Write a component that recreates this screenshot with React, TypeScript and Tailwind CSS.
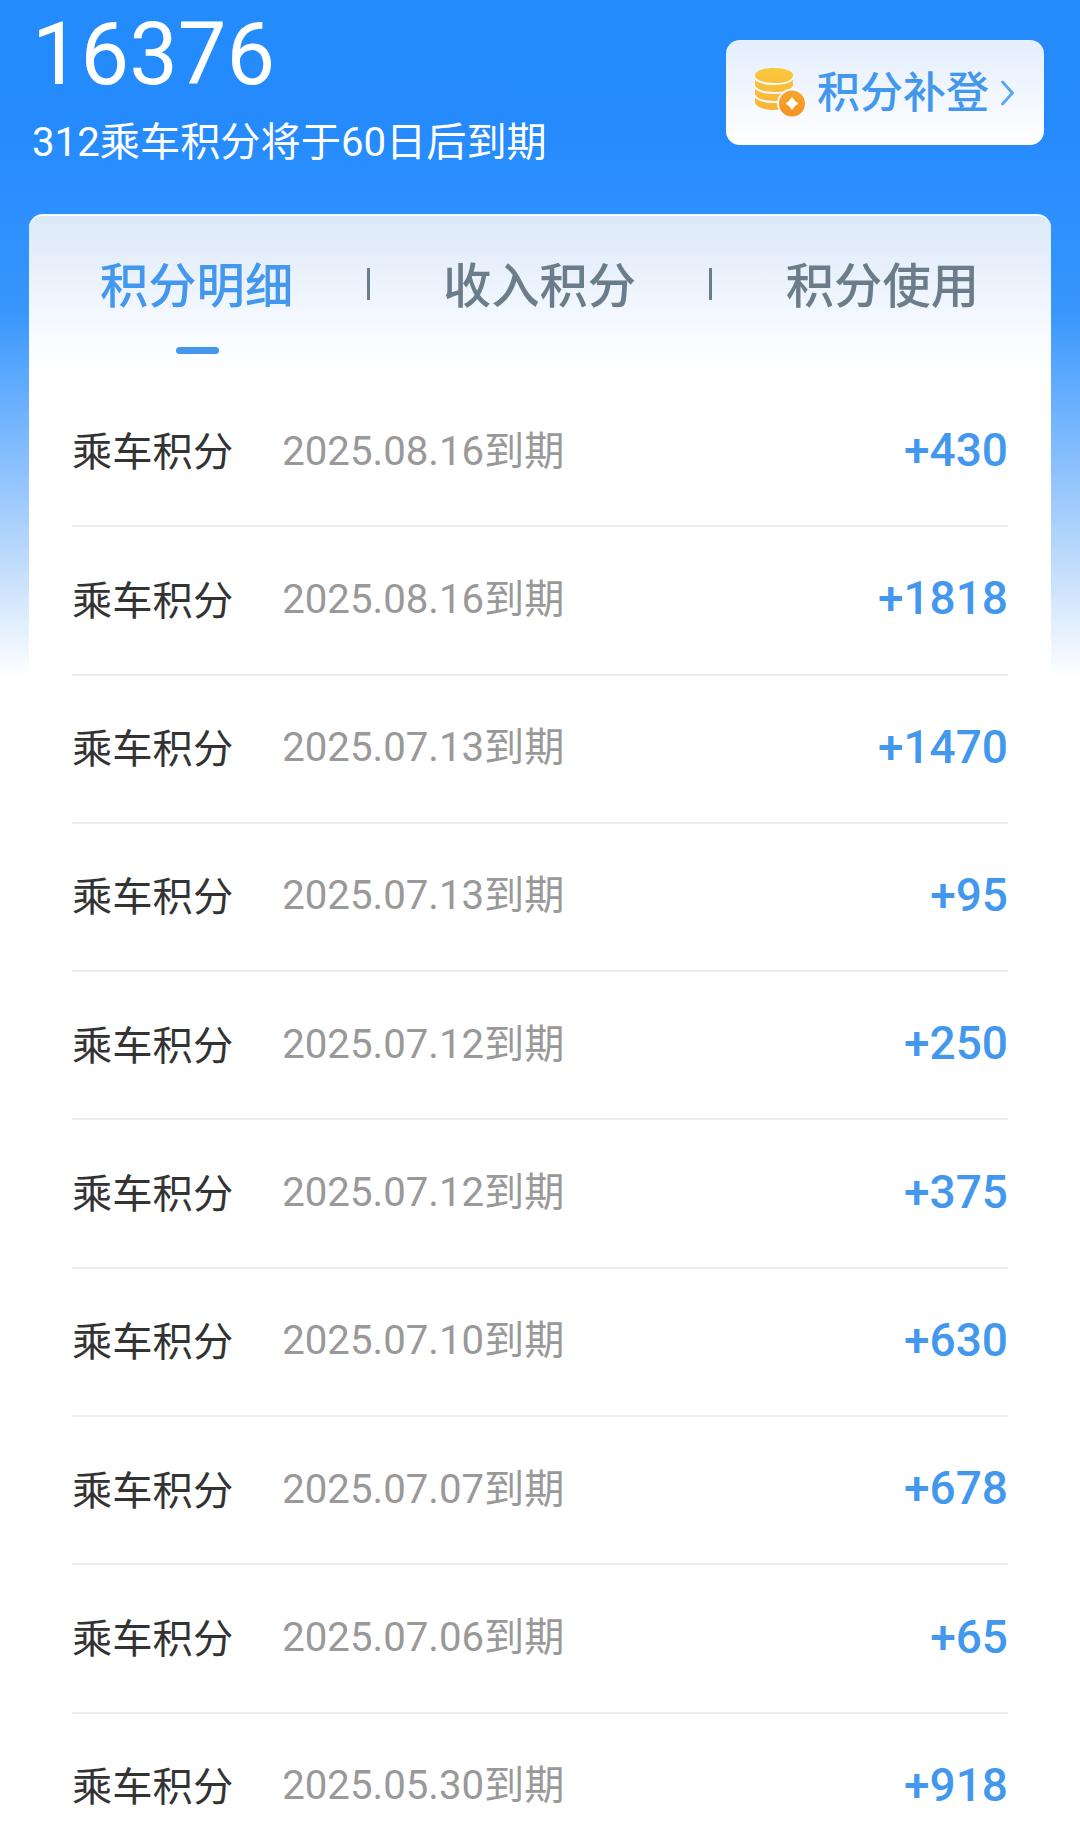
const RECORDS = [
  { date: '2025.08.16', points: 430 },
  { date: '2025.08.16', points: 1818 },
  { date: '2025.07.13', points: 1470 },
  { date: '2025.07.13', points: 95 },
  { date: '2025.07.12', points: 250 },
  { date: '2025.07.12', points: 375 },
  { date: '2025.07.10', points: 630 },
  { date: '2025.07.07', points: 678 },
  { date: '2025.07.06', points: 65 },
  { date: '2025.05.30', points: 918 },
]

const TABS = ['积分明细', '收入积分', '积分使用']

function CoinsIcon() {
  return (
    <svg className="w-[52px] h-[52px] shrink-0" viewBox="0 0 52 52" fill="none" aria-hidden>
      <defs>
        <linearGradient id="stack" x1="0" y1="0" x2="0" y2="1">
          <stop offset="0" stopColor="#f8c93c" />
          <stop offset="1" stopColor="#f9b437" />
        </linearGradient>
        <linearGradient id="coin" x1="0" y1="0" x2="0" y2="1">
          <stop offset="0" stopColor="#f6a62c" />
          <stop offset="1" stopColor="#f39320" />
        </linearGradient>
      </defs>
      <path d="M0 8C0 4 8 1 19 1s19 3 19 7v27c0 4-8 8-19 8S0 39 0 35Z" fill="url(#stack)" />
      <g stroke="#f6f8fd" strokeWidth="2">
        <path d="M-1 9.500c2 5 10 7.500 20 7.500s18-2.500 20-7.500" />
        <path d="M-1 18.500c2 5 10 7.500 20 7.500s18-2.500 20-7.500" />
        <path d="M-1 27.500c2 5 10 7.500 20 7.500s18-2.500 20-7.500" />
      </g>
      <circle cx="37" cy="36.500" r="15" fill="#f6f8fd" />
      <circle cx="37" cy="36.500" r="13" fill="url(#coin)" />
      <path d="M37 30.500q1.800 4.200 6 6q-4.200 1.800-6 6q-1.800-4.200-6-6q4.200-1.800 6-6Z" fill="#fff" stroke="#fff" strokeWidth="1" />
    </svg>
  )
}

function Header() {
  return (
    <header className="flex h-[214px] items-start justify-between pl-8 pr-9 text-white">
      <div className="flex flex-col">
        <div className="mt-[5px] h-[100px] text-[86.500px] leading-[100px]">16376</div>
        <div className="mt-2 h-[60px] text-[40.200px] leading-[60px]">312乘车积分将于60日后到期</div>
      </div>
      <button className="mt-10 flex h-[105px] w-[318px] items-center rounded-[14px] bg-linear-to-b from-[#e4eefd] to-white pl-[29px] text-[#4398ee]">
        <CoinsIcon />
        <span className="ml-[10px] text-[43px] leading-[60px] font-medium">积分补登</span>
        <svg className="ml-[11px] h-[26px] w-4" viewBox="0 0 16 26" fill="none" aria-hidden>
          <path d="M2.500 2 12.500 13 2.500 24" stroke="#58a5f3" strokeWidth="2.800" strokeLinecap="round" />
        </svg>
      </button>
    </header>
  )
}

function Tabs() {
  return (
    <nav className="flex h-[163px] justify-between pl-[71px] pr-[72px] pt-[41px]">
      {TABS.map((tab, i) => (
        <div key={tab} className="contents">
          {i > 0 && <span className="mt-[11px] h-8 w-[3px] bg-[#6b7c8b]" />}
          <div
            className={
              i === 0
                ? 'flex flex-col items-center font-medium text-[#4398ee]'
                : 'flex flex-col items-center font-medium text-[#6b7c8b]'
            }
          >
            <span className="text-[48.300px] leading-[60px]">{tab}</span>
            {i === 0 && <span className="ml-[2px] mt-[30px] h-[7px] w-[43px] rounded-full bg-[#4398ee]" />}
          </div>
        </div>
      ))}
    </nav>
  )
}

export default function App() {
  return (
    <div className="h-[1829px] w-[1080px] overflow-hidden bg-white bg-[linear-gradient(180deg,#248bfd_0px,#258bfd_130px,#2e90ff_220px,#3896fb_310px,#60abff_385px,#8dc1fd_470px,#b8d8fc_550px,#e0eefd_622px,#ffffff_678px)] font-['Roboto','Noto_Sans_CJK_SC',sans-serif]">
      <Header />
      <main className="mx-[29px] h-[1615px] rounded-t-[14px] border-t-2 border-[#f4fdff] bg-white bg-[linear-gradient(180deg,#dbe9f8_0px,#e8f0fb_50px,#f5f9ff_105px,#ffffff_160px)]">
        <Tabs />
        {/* points history */}
        <ul className="px-[43px]">
          {RECORDS.map(({ date, points }, i) => (
            <li key={i} className="flex h-[148.300px] items-center border-b-2 border-[#ececec]">
              <span className="pt-[3px] text-[40.300px] text-[#333]">乘车积分</span>
              <span className="ml-[49px] pb-px text-[40.200px] text-[#999]">{date}到期</span>
              <span className="ml-auto pb-[3px] text-[46px] font-medium text-[#4398ee]">+{points}</span>
            </li>
          ))}
        </ul>
      </main>
    </div>
  )
}
